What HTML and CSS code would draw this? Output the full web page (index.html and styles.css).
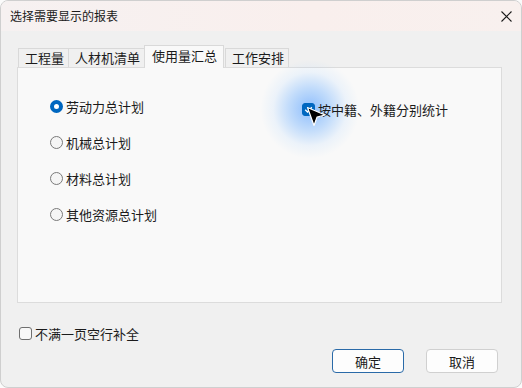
FILE: index.html
```html
<!DOCTYPE html>
<html lang="zh-CN">

<head>
    <meta charset="UTF-8">
    <meta name="viewport" content="width=device-width, initial-scale=1.0">
    <title>选择需要显示的报表</title>
    <link rel="stylesheet" href="styles.css">
</head>

<body>
    <div class="dialog">
        <div class="titlebar">
            <span class="title">选择需要显示的报表</span>
            <button class="close-btn" aria-label="关闭">
                <svg width="11" height="11" viewBox="0 0 11 11">
                    <path d="M0.5 0.5 L10.5 10.5 M10.5 0.5 L0.5 10.5" stroke="#1b1b1b" stroke-width="1.1" fill="none"/>
                </svg>
            </button>
        </div>

        <div class="dialog-body">
            <div class="tabs">
                <div class="tab">工程量</div>
                <div class="tab">人材机清单</div>
                <div class="tab active">使用量汇总</div>
                <div class="tab">工作安排</div>
            </div>

            <div class="panel">
                <div class="radio-list">
                    <label class="radio checked"><span class="radio-dot"></span>劳动力总计划</label>
                    <label class="radio"><span class="radio-dot"></span>机械总计划</label>
                    <label class="radio"><span class="radio-dot"></span>材料总计划</label>
                    <label class="radio"><span class="radio-dot"></span>其他资源总计划</label>
                </div>
                <div class="right-col">
                    <label class="check checked">
                        <span class="check-box">
                            <svg width="13" height="13" viewBox="0 0 13 13">
                                <path d="M3.2 6.8 L5.5 9 L9.8 4.3" stroke="#fff" stroke-width="1.3" fill="none"/>
                            </svg>
                        </span>按中籍、外籍分别统计
                    </label>
                    <div class="click-glow"></div>
                    <svg class="cursor" width="22" height="22" viewBox="0 0 22 22">
                        <path d="M1.5 1.5 L19 9 L11 11.2 L8 19.5 Z" fill="#000" stroke="#fff" stroke-width="1.2" stroke-linejoin="round"/>
                    </svg>
                </div>
            </div>

            <label class="check fill-check"><span class="check-box"></span>不满一页空行补全</label>

            <div class="buttons">
                <button class="btn primary">确定</button>
                <button class="btn">取消</button>
            </div>
        </div>
    </div>
</body>

</html>
```

FILE: styles.css
```css
body {
    margin: 0;
    background: #fbfbfb;
    font-family: "Noto Sans CJK SC", "Noto Sans", sans-serif;
    color: #1b1b1b;
}

.dialog {
    width: 522px;
    height: 388px;
    box-sizing: border-box;
    border: 1px solid #cfcfcf;
    border-radius: 8px;
    background: #f0f0f0;
    overflow: hidden;
    display: flex;
    flex-direction: column;
}

.titlebar {
    height: 30px;
    flex: none;
    display: flex;
    align-items: center;
    justify-content: space-between;
    padding-left: 9px;
    background: linear-gradient(90deg, #f6f1f1, #f9efed 60%, #f8f0ee);
}

.title {
    font-size: 12px;
    line-height: 1;
}

.close-btn {
    width: 30px;
    height: 30px;
    border: none;
    background: transparent;
    display: flex;
    align-items: center;
    justify-content: center;
    padding: 0;
}

.dialog-body {
    flex: 1;
    display: flex;
    flex-direction: column;
    padding: 14px 19px 0 16px;
}

.tabs {
    display: flex;
    align-items: flex-end;
    height: 22px;
    padding-left: 1px;
}

.tab {
    font-size: 13px;
    height: 19px;
    line-height: 18px;
    padding: 0 4px 0 6px;
    background: #f0f0f0;
    border: 1px solid #d9d9d9;
    border-bottom: none;
    margin-right: -1px;
    box-sizing: border-box;
}

.tab.active {
    height: 23px;
    line-height: 20px;
    background: #f9f9f9;
    padding: 0 6px 0 7px;
    position: relative;
    z-index: 1;
    margin: 0 1px -1px 0;
}

.panel {
    height: 236px;
    background: #f9f9f9;
    border: 1px solid #dcdcdc;
    box-sizing: border-box;
    display: grid;
    grid-template-columns: 253px 1fr;
    padding: 29px 0 0 32px;
}

.radio-list {
    display: flex;
    flex-direction: column;
    gap: 17px;
}

.radio,
.check {
    display: flex;
    align-items: center;
    font-size: 13px;
    height: 19px;
    line-height: 19px;
}

.radio-dot {
    width: 13px;
    height: 13px;
    box-sizing: border-box;
    border-radius: 50%;
    border: 1px solid #7a7a7a;
    background: #f5f5f5;
    margin-right: 3px;
}

.radio.checked .radio-dot {
    border: 4px solid #0067c0;
    background: #fff;
}

.right-col {
    position: relative;
    padding-top: 3px;
    margin-left: -1px;
}

.check-box {
    width: 13px;
    height: 13px;
    box-sizing: border-box;
    border: 1px solid #6f6f6f;
    border-radius: 3px;
    background: #f8f8f8;
    margin-right: 3px;
    flex: none;
}

.check.checked .check-box {
    background: #0067c0;
    border-color: #0067c0;
}

.check-box svg {
    display: block;
    margin: -1px;
}

.right-col .check {
    position: relative;
    z-index: 1;
}

.click-glow {
    position: absolute;
    left: -42px;
    top: -38px;
    width: 100px;
    height: 100px;
    border-radius: 50%;
    background: radial-gradient(circle, rgba(70, 150, 255, 0.6) 0, rgba(90, 165, 255, 0.35) 30%, rgba(140, 195, 255, 0.12) 52%, rgba(255, 255, 255, 0) 70%);
    z-index: 0;
}

.cursor {
    position: absolute;
    left: 4px;
    top: 9px;
    z-index: 2;
}

.fill-check {
    margin: 21px 0 0 2px;
}

.buttons {
    display: flex;
    justify-content: flex-end;
    gap: 22px;
    margin-top: 6px;
    padding-right: 4px;
}

.btn {
    width: 72px;
    height: 24px;
    font-family: inherit;
    font-size: 13px;
    color: #1b1b1b;
    background: #fdfdfd;
    border: 1px solid #d0d0d0;
    border-radius: 4px;
    padding: 0;
}

.btn.primary {
    border-color: #2a6aa8;
}
```
